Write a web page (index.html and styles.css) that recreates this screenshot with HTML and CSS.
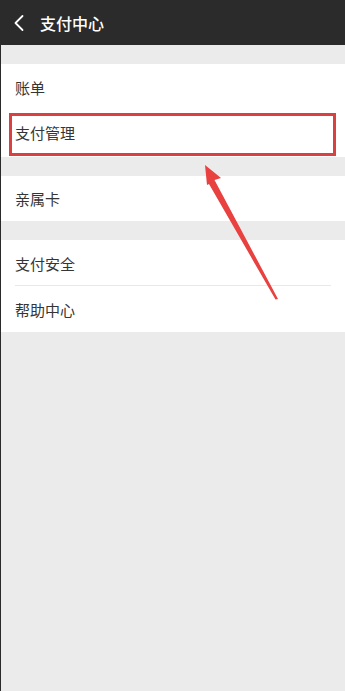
FILE: index.html
```html
<!DOCTYPE html>
<html lang="zh-CN">
<head>
<meta charset="utf-8">
<link rel="stylesheet" href="styles.css">
</head>
<body>
<div class="page">
  <header class="topbar">
    <svg class="back" width="12" height="18" viewBox="0 0 12 18"><path d="M9.5 2 L2.5 9 L9.5 16" fill="none" stroke="#fff" stroke-width="1.8" stroke-linecap="round" stroke-linejoin="round"/></svg>
    <span class="title">支付中心</span>
  </header>
  <div class="gap"></div>
  <section class="group">
    <div class="row r1">账单</div>
    <div class="row r2">支付管理<span class="highlight"></span></div>
  </section>
  <div class="gap"></div>
  <section class="group">
    <div class="row r3">亲属卡</div>
  </section>
  <div class="gap"></div>
  <section class="group">
    <div class="row r4 sep">支付安全</div>
    <div class="row r4">帮助中心</div>
  </section>
  <svg class="arrow" width="345" height="691" viewBox="0 0 345 691">
    <path d="M205 165 L221 178 L214.5 180 L278 299 L275.5 299.5 L209 184 L207 185 Z" fill="#e8413f"/>
  </svg>
</div>
</body>
</html>
```
FILE: styles.css
```css
html, body {
  margin: 0;
  padding: 0;
}
body {
  width: 345px;
  height: 691px;
  overflow: hidden;
  background: #ebebeb;
  font-family: "Noto Sans CJK SC", "Noto Sans", sans-serif;
}
.page {
  position: relative;
  height: 691px;
  background: #ebebeb;
  border-left: 1px solid #2a2a2a;
  box-sizing: border-box;
}
.topbar {
  height: 45px;
  background: #2b2b2b;
  display: flex;
  align-items: center;
  padding-left: 13px;
  box-sizing: border-box;
  margin-left: -1px;
}
.back {
  display: block;
  margin-right: 15px;
}
.title {
  color: #ffffff;
  font-size: 16px;
  font-weight: 500;
  line-height: 1;
}
.gap {
  height: 19px;
}
.group {
  background: #ffffff;
}
.row {
  position: relative;
  display: flex;
  align-items: center;
  padding-left: 14px;
  font-size: 15px;
  color: #353535;
  box-sizing: border-box;
}
.r1 { height: 46px; }
.r2 { height: 47px; padding-bottom: 2px; }
.r3 { height: 45px; }
.r4 { height: 46px; }
.sep::after {
  content: "";
  position: absolute;
  left: 14px;
  right: 14px;
  bottom: 0;
  height: 1px;
  background: #e9e9e9;
}
.highlight {
  position: absolute;
  left: 8px;
  right: 9px;
  top: 3px;
  bottom: 1px;
  border: 3px solid #d94141;
}
.arrow {
  position: absolute;
  left: -1px;
  top: 0;
  pointer-events: none;
}
```
